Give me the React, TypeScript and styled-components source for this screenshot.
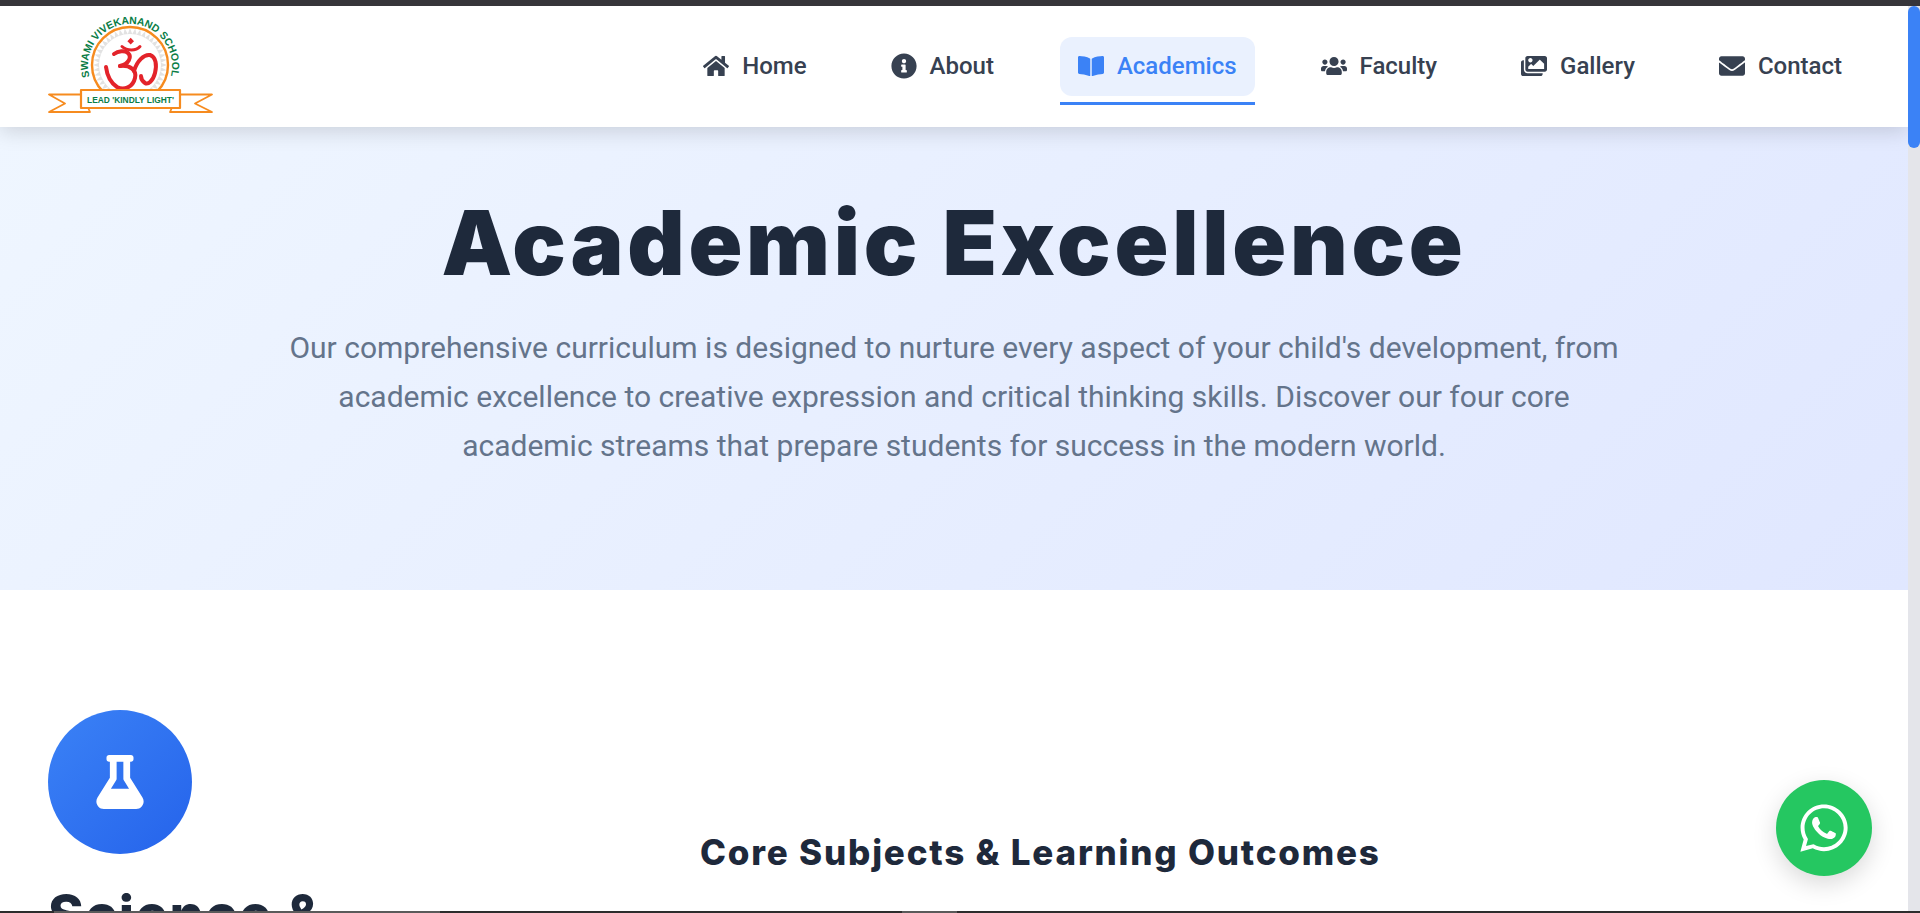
import React from "react";
import styled, { createGlobalStyle } from "styled-components";
import { FaBookOpen, FaEnvelope, FaFlask, FaHome, FaImages, FaInfoCircle, FaUsers, FaWhatsapp } from "react-icons/fa";

const GlobalStyle = createGlobalStyle`
  html, body {
    margin: 0;
    height: 100%;
    overflow: hidden;
    background: #fff;
    font-family: Roboto, sans-serif;
  }
  * { box-sizing: border-box; }
`;

const Shell = styled.div`
  height: 913px;
  display: flex;
  flex-direction: column;
  overflow: hidden;
`;

const WindowEdge = styled.div`
  height: 6px;
  flex: none;
  background: #36353a;
`;

const Middle = styled.div`
  flex: 1;
  min-height: 0;
  display: flex;
`;

const Page = styled.main`
  flex: 1;
  min-width: 0;
  position: relative;
  overflow: hidden;
  background: #fff;
`;

const ScrollTrack = styled.div`
  width: 12px;
  flex: none;
  background: #e4e5ea;
`;

const ScrollThumb = styled.div`
  height: 142px;
  border-radius: 6px;
  background: #3b82f6;
`;

const TaskStrip = styled.div`
  height: 2px;
  flex: none;
  display: flex;
  background: #2d2d2d;
`;

const TaskSegment = styled.div<{ $width: number; $lit?: boolean }>`
  width: ${(p) => p.$width}px;
  background: ${(p) => (p.$lit ? "#5a5a5a" : "#2d2d2d")};
`;

const Header = styled.header`
  position: relative;
  z-index: 2;
  height: 121px;
  padding: 0 48px;
  display: flex;
  align-items: center;
  justify-content: space-between;
  background: #fff;
  box-shadow: 0 4px 20px rgba(0, 0, 0, 0.15);
`;

const LogoMark = styled.svg`
  display: block;
  width: 170px;
  height: 100px;
  margin-top: -1px;
`;

const NavLinks = styled.nav`
  display: flex;
  align-items: center;
  gap: 48px;
  margin-top: -1px;
`;

const NavItem = styled.a<{ $active?: boolean }>`
  position: relative;
  height: 59px;
  padding: 0 18px;
  display: flex;
  align-items: center;
  gap: 13px;
  border-radius: 12px;
  font-size: 24px;
  font-weight: 500;
  color: ${(p) => (p.$active ? "#3b82f6" : "#374151")};
  background: ${(p) => (p.$active ? "#eaf1fe" : "transparent")};
  svg {
    font-size: 26px;
    flex: none;
  }
  &::after {
    content: "";
    display: ${(p) => (p.$active ? "block" : "none")};
    position: absolute;
    left: 0;
    right: 0;
    bottom: -9px;
    height: 3px;
    background: #3b82f6;
  }
`;

const Hero = styled.section`
  height: 463px;
  padding: 64px 48px 0;
  display: flex;
  flex-direction: column;
  align-items: center;
  background: linear-gradient(135deg, #eff6ff 0%, #e0e7ff 100%);
`;

const HeroTitle = styled.h1`
  margin: 0 0 29px;
  font-family: Inter, sans-serif;
  font-size: 89px;
  font-weight: 900;
  letter-spacing: 3.7px;
  line-height: 103px;
  color: #1e293b;
`;

const HeroText = styled.p`
  margin: 0;
  max-width: 1340px;
  text-align: center;
  font-size: 30px;
  line-height: 49px;
  color: #64748b;
`;

const Stream = styled.section`
  padding: 120px 48px 0;
  display: grid;
  grid-template-columns: 1fr 2fr;
  gap: 48px;
`;

const StreamSide = styled.div`
  display: flex;
  flex-direction: column;
  align-items: flex-start;
  gap: 32px;
`;

const StreamIcon = styled.div`
  width: 144px;
  height: 144px;
  border-radius: 50%;
  display: flex;
  align-items: center;
  justify-content: center;
  color: #fff;
  font-size: 54px;
  background: linear-gradient(135deg, #3b82f6, #2563eb);
`;

const StreamTitle = styled.h2`
  margin: 0;
  font-family: Inter, sans-serif;
  font-size: 54px;
  font-weight: 800;
  letter-spacing: 1.5px;
  line-height: 58px;
  color: #1e293b;
`;

const StreamBody = styled.div`
  padding: 120px 0 0 16px;
`;

const SubjectsTitle = styled.h3`
  margin: 0;
  font-family: Inter, sans-serif;
  font-size: 35px;
  font-weight: 800;
  letter-spacing: 1.8px;
  line-height: 44px;
  color: #1e293b;
`;

const WhatsappButton = styled.a`
  position: absolute;
  z-index: 3;
  right: 36px;
  bottom: 35px;
  width: 96px;
  height: 96px;
  border-radius: 50%;
  display: flex;
  align-items: center;
  justify-content: center;
  color: #fff;
  font-size: 54px;
  background: #25c761;
  box-shadow: 0 8px 25px rgba(0, 0, 0, 0.15);
`;

const navEntries = [
  { label: "Home", Icon: FaHome },
  { label: "About", Icon: FaInfoCircle },
  { label: "Academics", Icon: FaBookOpen, active: true },
  { label: "Faculty", Icon: FaUsers },
  { label: "Gallery", Icon: FaImages },
  { label: "Contact", Icon: FaEnvelope },
];

// gray sun rays behind the om, in page coordinates of the logo
const rayPoints = () => {
  const points: string[] = [];
  const count = 44;
  for (let i = 0; i < count * 2; i++) {
    const radius = i % 2 === 0 ? 37 : 31;
    const angle = (Math.PI * i) / count;
    points.push(`${(130 + radius * Math.cos(angle)).toFixed(1)},${(66 + radius * Math.sin(angle)).toFixed(1)}`);
  }
  return points.join(" ");
};

const Logo = () => (
  <LogoMark viewBox="48 17 170 100">
    <defs>
      <path id="schoolArc" d="M 89.5 78 A 42 42 0 1 1 170.5 78" />
    </defs>
    <polygon points={rayPoints()} fill="#e2e2e2" />
    <circle cx="130" cy="66" r="31" fill="#fff" />
    <circle cx="130" cy="66" r="38" fill="none" stroke="#f68b1f" strokeWidth="2.4" />
    <text fontFamily="'Liberation Sans', sans-serif" fontSize="10.4" fontWeight="700" fill="#0a7d46">
      <textPath href="#schoolArc" textLength="153" lengthAdjust="spacing">
        SWAMI VIVEKANAND SCHOOL
      </textPath>
    </text>
    <g fill="none" stroke="#e3232a" strokeWidth="4" strokeLinecap="round">
      <path d="M114 55 C118 52 125 51 128 54 C132 58 129 65 120 67" />
      <path d="M120 67 C130 66 137 71 135 79 C133 88 124 92 117 88 C111 84 107 76 106 68" />
      <path d="M134 72 C137 62 144 55 150 56 C156 58 157 66 155 74 C153 82 148 86 145 84 C142 82 141 79 141 77" />
      <path d="M122 47.5 C127 52 136 52 140 47.5" strokeWidth="3" />
    </g>
    <polygon points="130.7,38.8 134,42.2 130.7,45.6 127.4,42.2" fill="#e3232a" />
    <g fill="#fff" stroke="#f68b1f" strokeWidth="1.8" strokeLinejoin="round">
      <polygon points="49,95.5 82,95.5 90,113 49,113 65,104.5" />
      <polygon points="212,95.5 178,95.5 170,113 212,113 195,104.5" />
      <rect x="81" y="91" width="99" height="18" strokeWidth="2.2" />
    </g>
    <text
      x="130.5"
      y="103.5"
      textAnchor="middle"
      fontFamily="'Liberation Sans', sans-serif"
      fontSize="8.6"
      fontWeight="700"
      fill="#0a7d46"
      textLength="87"
      lengthAdjust="spacingAndGlyphs"
    >
      LEAD 'KINDLY LIGHT'
    </text>
  </LogoMark>
);

const App: React.FC = () => {
  return (
    <Shell>
      <GlobalStyle />
      <WindowEdge />
      <Middle>
        <Page>
          <Header>
            <Logo />
            <NavLinks>
              {navEntries.map(({ label, Icon, active }) => (
                <NavItem key={label} $active={active}>
                  <Icon />
                  {label}
                </NavItem>
              ))}
            </NavLinks>
          </Header>

          <Hero>
            <HeroTitle>Academic Excellence</HeroTitle>
            <HeroText>
              Our comprehensive curriculum is designed to nurture every aspect of your child's development, from
              academic excellence to creative expression and critical thinking skills. Discover our four core academic
              streams that prepare students for success in the modern world.
            </HeroText>
          </Hero>

          <Stream>
            <StreamSide>
              <StreamIcon>
                <FaFlask />
              </StreamIcon>
              <StreamTitle>Science &amp;</StreamTitle>
            </StreamSide>
            <StreamBody>
              <SubjectsTitle>Core Subjects &amp; Learning Outcomes</SubjectsTitle>
            </StreamBody>
          </Stream>

          <WhatsappButton>
            <FaWhatsapp />
          </WhatsappButton>
        </Page>
        <ScrollTrack>
          <ScrollThumb />
        </ScrollTrack>
      </Middle>
      <TaskStrip>
        <TaskSegment $width={54} />
        <TaskSegment $width={386} $lit />
        <TaskSegment $width={462} />
        <TaskSegment $width={55} $lit />
      </TaskStrip>
    </Shell>
  );
};

export default App;
